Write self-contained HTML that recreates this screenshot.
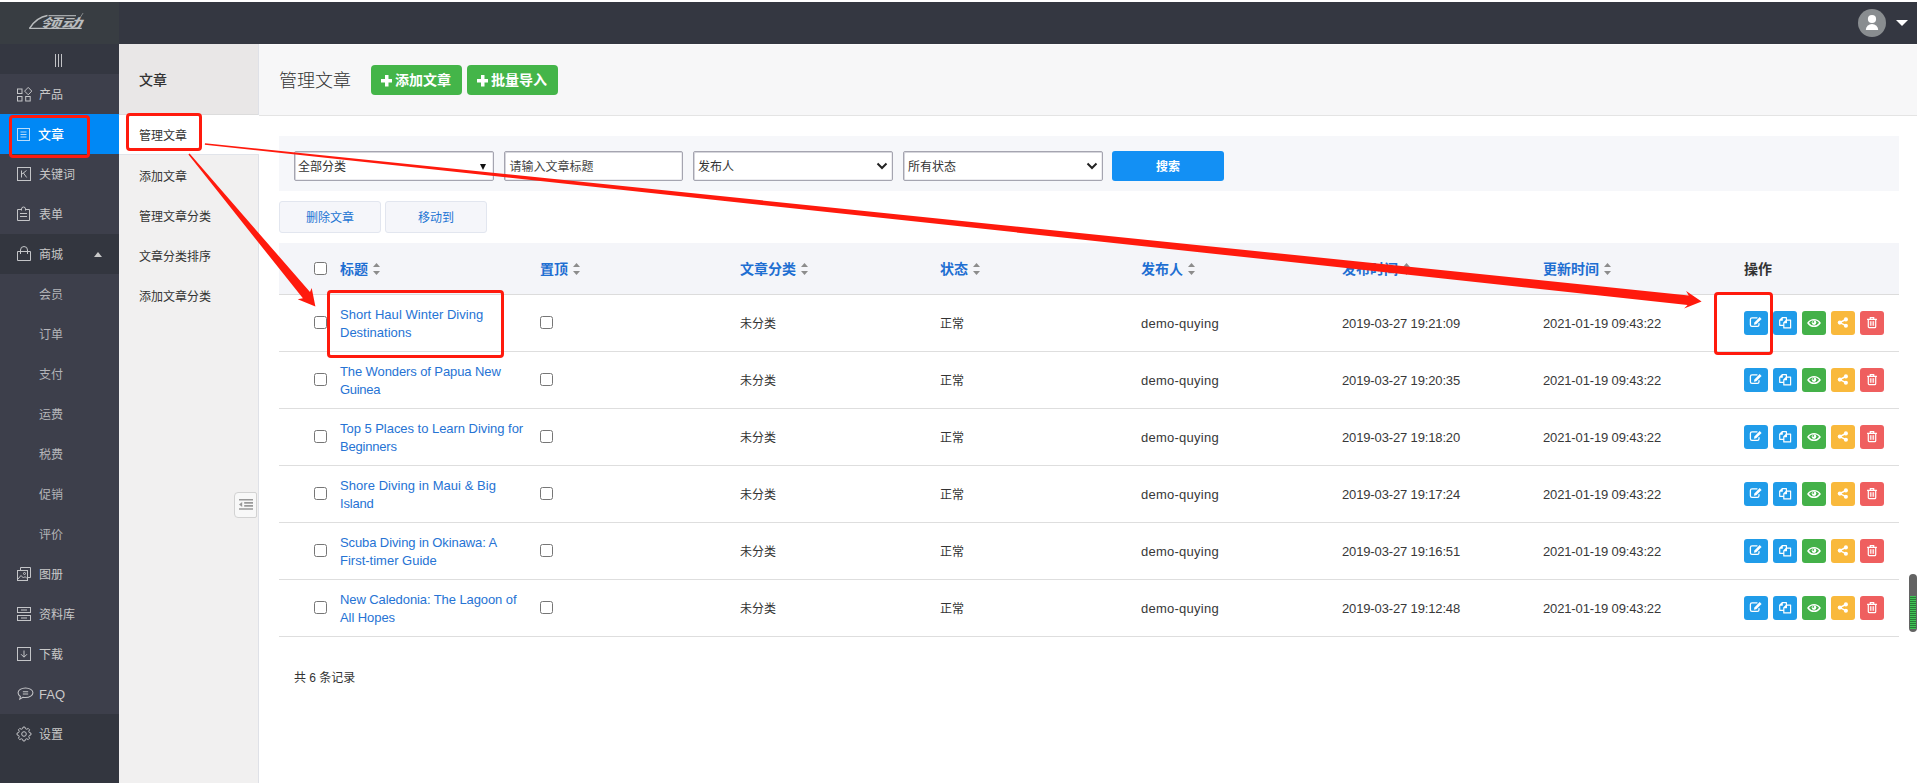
<!DOCTYPE html>
<html lang="zh-CN">
<head>
<meta charset="utf-8">
<title>管理文章</title>
<style>
*{box-sizing:border-box;margin:0;padding:0}
html,body{width:1917px;height:783px;overflow:hidden;background:#fff}
body{position:relative;font-family:"Liberation Sans","Noto Sans CJK SC",sans-serif;font-size:12px;color:#333}
a{text-decoration:none}
i{font-style:normal}
#hdr{position:absolute;left:0;top:2px;width:1917px;height:42px;background:#343741}
#logo{position:absolute;left:0;top:0;width:119px;height:42px;background:#383d42}
#logo svg{position:absolute;left:22px;top:6px}
#user{position:absolute;left:1858px;top:7px;width:59px;height:28px}
#user .caret{position:absolute;left:38px;top:11px;border:6px solid transparent;border-top:6.500px solid #fff;border-bottom:0}
#side{position:absolute;left:0;top:44px;width:119px;height:739px;background:#3d3f4b}
#side .tg{height:30px;background:#343741;position:relative}
#side .tg i{position:absolute;top:10px;width:1.300px;height:13px;background:#c2c3c6}
#side .tg i:nth-child(1){left:55px}#side .tg i:nth-child(2){left:58px}#side .tg i:nth-child(3){left:61px}
#side .mi{height:40px;position:relative;color:#c9c9c9;font-size:12px;line-height:42px;padding-left:39px;white-space:nowrap}
#side .mi.lt{font-size:13px}
#side .mi.sm{color:#b4b5b9}
#side .mi.dk{background:#33363f}
#side .mi.last{height:69px}
#side .mi.act{background:#0088f5;color:#fff;font-weight:500;font-size:13px;padding-left:38px}
#side .mi svg{position:absolute;left:16px;top:12px;width:16px;height:16px;color:#c4c5c8}
#side .mi.act svg{color:#b8dcfb}
#side .up{position:absolute;left:94px;top:18px;border:4px solid transparent;border-bottom:5px solid #c9c9c9;border-top:0}
#sub{position:absolute;left:119px;top:44px;width:139px;height:739px;background:#f1f0f0}
#sub:after{content:"";position:absolute;left:139px;top:0;width:1px;height:739px;background:#dfe1e7}
#sub h3{height:71px;line-height:73px;padding-left:20px;font-size:14px;font-weight:500;color:#333;background:#e9e7e7;border-bottom:1px solid #dcdcdc}
#sub .si{height:40px;line-height:44px;padding-left:20px;font-size:12px;color:#333}
#sub .si.act{background:#fff;width:140px;position:relative;z-index:2;height:40px;line-height:43px;border-bottom:1px solid #e1e4ea}
#fold{position:absolute;left:115px;top:448px;width:23px;height:26px;border:1px solid #d2d2d2;border-radius:4px 2px 2px 4px;background:#f8f8f8}
#fold svg{position:absolute;left:3.700px;top:6px}
#main{position:absolute;left:260px;top:44px;width:1657px;height:739px;background:#fff}
#tbar{position:absolute;left:-1px;top:0;width:1658px;height:72px;background:#f7f7f8;border-top:1px solid #fcfcfc;border-bottom:1px solid #e4e4e4}
#tbar h1{position:absolute;left:20px;top:22px;font-size:18px;font-weight:300;color:#333;line-height:28px}
.gbtn{position:absolute;top:20px;height:30px;background:#44b549;border-radius:4px;color:#fff;font-weight:bold;font-size:14px;line-height:31px;padding-left:24px;white-space:nowrap}
.gbtn .plus{position:absolute;left:9.500px;top:10px;width:11.500px;height:11.500px;background:linear-gradient(#fff,#fff) center/11.500px 3.500px no-repeat,linear-gradient(#fff,#fff) center/3.500px 11.500px no-repeat}
#filter{position:absolute;left:19px;top:92px;width:1620px;height:55px;background:#f6f7fa}
.sel,.inp{position:absolute;top:15px;height:30px;background:#fff;border:1px solid #a5a5b0;border-radius:2px;box-shadow:inset 1px 1px 0 #d6d6dc,inset -1px -1px 0 #ececf0;font-size:12px;line-height:31px;color:#333;padding-left:3px;white-space:nowrap}
.inp{padding-left:4.500px;color:#444}
.sel .tri{position:absolute;right:7px;top:12px;border:3.500px solid transparent;border-top:6px solid #111;border-bottom:0}
.sel .chev{position:absolute;right:4px;top:10px;width:12px;height:8px}
.sbtn{position:absolute;left:833px;top:15px;width:112px;height:30px;background:#1390f4;border-radius:3px;color:#fff;font-size:12px;font-weight:bold;line-height:33px;text-align:center}
.sel:not(.old){padding-left:4px}
.lbtn{position:absolute;top:157px;width:102px;height:32px;background:#f5f6fa;border:1px solid #e2e6ef;border-radius:3px;color:#2274d3;font-size:12px;line-height:32px;text-align:center}
#thead{position:absolute;left:19px;top:199px;width:1620px;height:52px;background:#f4f5f9;border-bottom:1px solid #dcdcdc}
.th{position:absolute;top:0;line-height:53px;font-size:14px;font-weight:bold;color:#1f6fd2;white-space:nowrap}
.th.dk{color:#333}
.srt{display:inline-block;width:7px;height:12px;margin-left:5px;vertical-align:-1px}
.cb{position:absolute;width:13px;height:13px;border:1px solid #767676;border-radius:2.500px;background:#fff}
.tr{position:absolute;left:19px;width:1620px;height:57px;border-bottom:1px solid #dedede}
.tr .td{position:absolute;top:0;line-height:59px;font-size:12px;color:#333;white-space:nowrap}
.tr .td.lat{font-size:13px;line-height:57px;color:#383838}
.tr .td.usr{letter-spacing:.25px}
.tr .td.dt{letter-spacing:-.14px}
.ttl{position:absolute;left:61px;top:11px;font-size:13px;line-height:18px;color:#2673d4;white-space:nowrap}
.ops{position:absolute;left:1465px;top:16px;height:24px;white-space:nowrap;font-size:0}
.ops i{display:inline-block;width:24px;height:24px;border-radius:3px;margin-right:5px;vertical-align:top}
.ops i svg{display:block;width:24px;height:24px}
.b1{background:#209ce9}.b2{background:#44b149}.b3{background:#f9b93c}.b4{background:#ef5f5f}
#total{position:absolute;left:34px;top:624.500px;font-size:12px;line-height:18px;color:#333}
#sbar{position:absolute;left:1649px;top:530px;width:8px;height:58px;border-radius:4px;background:#636363}
#sbar i{position:absolute;left:1px;top:22px;width:6px;height:33px;background:repeating-linear-gradient(#3fc455 0,#3fc455 1px,#2a7a38 1px,#2a7a38 2px)}
#anno{position:absolute;left:0;top:0;width:1917px;height:783px;z-index:10;pointer-events:none}

</style>
</head>
<body>
<div id="hdr">
<div id="logo"><svg viewBox="0 0 74 30" width="74" height="30"><g fill="none" stroke="#b9bcbe"><path d="M7.600 20.300C12 13.500 17 9 25.500 7.600" stroke-width="1.500"/><path d="M26.500 7.700h27.500" stroke-width="1.100"/><path d="M7.200 20.400h52.500" stroke-width="1.300"/><path d="M58 9.800l3.100-4.800" stroke-width=".6"/></g><text transform="translate(17.500 19.800) skewX(-24)" font-family="Liberation Sans,Noto Sans CJK SC,sans-serif" font-size="13" font-weight="bold" fill="#b9bcbe" textLength="42" lengthAdjust="spacingAndGlyphs">领动</text></svg></div>
<div id="user"><svg viewBox="0 0 28 28" width="28" height="28"><circle cx="14" cy="14" r="14" fill="#898d90"/><circle cx="14" cy="10" r="4.100" fill="#fff"/><path d="M7.800 21a6.200 6 0 0 1 12.400 0z" fill="#fff"/></svg><b class="caret"></b></div>
</div>
<div id="side"><div class="tg"><i></i><i></i><i></i></div><div class="mi "><svg viewBox="0 0 16 16"><rect x="1.500" y="3" width="4.500" height="4.500" fill="none" stroke="currentColor" stroke-width="1"/><rect x="1.500" y="10.500" width="4.500" height="4.500" fill="none" stroke="currentColor" stroke-width="1"/><rect x="9.700" y="10.500" width="4.500" height="4.500" fill="none" stroke="currentColor" stroke-width="1"/><path d="M12.200 1.400l3.600 3.700-3.600 3.700-3.600-3.700z" fill="none" stroke="currentColor" stroke-width="1"/></svg>产品</div><div class="mi act"><svg viewBox="0 0 16 16"><rect x="1.500" y="2.500" width="12" height="12" fill="none" stroke="currentColor" stroke-width="1"/><path d="M4.500 6h6M4.500 8.500h6M4.500 11h6" fill="none" stroke="currentColor" stroke-width="1"/></svg>文章</div><div class="mi "><svg viewBox="0 0 16 16"><rect x="1.500" y="1.500" width="13" height="13" fill="none" stroke="currentColor" stroke-width="1"/><path d="M5.500 4.500v7M10.500 4.500L5.700 8.300M7.400 7l3.300 4.500" fill="none" stroke="currentColor" stroke-width="1"/></svg>关键词</div><div class="mi "><svg viewBox="0 0 16 16"><path d="M5 3.500H1.500v11h12v-11H10" fill="none" stroke="currentColor" stroke-width="1"/><path d="M5.500 4.500V3a2 2 0 0 1 4 0v1.500" fill="none" stroke="currentColor" stroke-width="1"/><path d="M4 7.500h7M4 10.500h7" fill="none" stroke="currentColor" stroke-width="1"/></svg>表单</div><div class="mi dk"><svg viewBox="0 0 16 16"><path d="M1.500 5.500h13v9h-13z" fill="none" stroke="currentColor" stroke-width="1"/><path d="M4.500 8V4a3.200 3.200 0 0 1 7 0v4" fill="none" stroke="currentColor" stroke-width="1"/></svg>商城<b class="up"></b></div><div class="mi sm">会员</div><div class="mi sm">订单</div><div class="mi sm">支付</div><div class="mi sm">运费</div><div class="mi sm">税费</div><div class="mi sm">促销</div><div class="mi sm">评价</div><div class="mi "><svg viewBox="0 0 16 16"><path d="M4.500 4.500V1.500h10v10h-3" fill="none" stroke="currentColor" stroke-width="1"/><rect x="1.500" y="4.500" width="10" height="10" fill="none" stroke="currentColor" stroke-width="1"/><path d="M2 13l3-3.500 2.500 2.500 1.500-1.500 2 2" fill="none" stroke="currentColor" stroke-width="1"/><circle cx="8.500" cy="7.500" r="1" fill="none" stroke="currentColor" stroke-width="1"/></svg>图册</div><div class="mi "><svg viewBox="0 0 16 16"><rect x="1.500" y="1.500" width="13" height="5" fill="none" stroke="currentColor" stroke-width="1"/><rect x="1.500" y="9.500" width="13" height="5" fill="none" stroke="currentColor" stroke-width="1"/><path d="M5 4h6M5 12h6" fill="none" stroke="currentColor" stroke-width="1"/></svg>资料库</div><div class="mi "><svg viewBox="0 0 16 16"><rect x="1.500" y="1.500" width="13" height="13" fill="none" stroke="currentColor" stroke-width="1"/><path d="M8 4.500v6.500M5 8.200l3 3 3-3" fill="none" stroke="currentColor" stroke-width="1"/></svg>下载</div><div class="mi lt"><svg viewBox="0 0 16 16" style="width:17px;left:17px" preserveAspectRatio="none"><path d="M8 2c3.900 0 7 2.200 7 4.800s-3.100 4.800-7 4.800c-.9 0-1.700-.1-2.500-.3L2.600 13.200l.6-2.700C1.800 9.600 1 8.300 1 6.800 1 4.200 4.100 2 8 2z" fill="none" stroke="currentColor" stroke-width="1"/><path d="M5.500 5.800h5M5.500 8h5" fill="none" stroke="currentColor" stroke-width="1"/></svg>FAQ</div><div class="mi dk last"><svg viewBox="0 0 16 16"><path d="M14.94 7.07L14.94 8.93L13.32 9.41L12.76 10.76L13.56 12.25L12.25 13.56L10.76 12.76L9.41 13.32L8.93 14.94L7.07 14.94L6.59 13.32L5.24 12.76L3.75 13.56L2.44 12.25L3.24 10.76L2.68 9.41L1.06 8.93L1.06 7.07L2.68 6.59L3.24 5.24L2.44 3.75L3.75 2.44L5.24 3.24L6.59 2.68L7.07 1.06L8.93 1.06L9.41 2.68L10.76 3.24L12.25 2.44L13.56 3.75L12.76 5.24L13.32 6.59z" fill="none" stroke="currentColor" stroke-width="1" stroke-linejoin="round"/><circle cx="8" cy="8" r="2.300" fill="none" stroke="currentColor" stroke-width="1"/></svg>设置</div></div>
<div id="sub"><h3>文章</h3><div class="si act">管理文章</div><div class="si">添加文章</div><div class="si">管理文章分类</div><div class="si">文章分类排序</div><div class="si">添加文章分类</div>
<div id="fold"><svg viewBox="0 0 14 11" width="14" height="11"><path d="M0 .800h14M5.200 3.900h8.800M5.200 6.900h8.800M0 10h14" stroke="#999" stroke-width="1.600"/><path d="M3.200 2.900v5L0 5.400z" fill="#999"/></svg></div>
</div>
<div id="main">
<div id="tbar"><h1>管理文章</h1><a class="gbtn" style="left:112px;width:91px"><b class="plus"></b>添加文章</a><a class="gbtn" style="left:208px;width:91px"><b class="plus"></b>批量导入</a></div>
<div id="filter">
<span class="sel old" style="left:15px;width:200px">全部分类<b class="tri"></b></span>
<span class="inp" style="left:225px;width:179px">请输入文章标题</span>
<span class="sel" style="left:414px;width:200px">发布人<svg class="chev" viewBox="0 0 12 8"><path d="M1.500 1.500L6 6l4.500-4.500" fill="none" stroke="#222" stroke-width="2"/></svg></span>
<span class="sel" style="left:624px;width:200px">所有状态<svg class="chev" viewBox="0 0 12 8"><path d="M1.500 1.500L6 6l4.500-4.500" fill="none" stroke="#222" stroke-width="2"/></svg></span>
<a class="sbtn">搜索</a>
</div>
<a class="lbtn" style="left:19px">删除文章</a><a class="lbtn" style="left:125px">移动到</a>
<div id="thead"><span class="cb" style="left:35px;top:19px"></span><span class="th " style="left:61px">标题<svg class="srt" viewBox="0 0 7 12"><path d="M3.500 0L7 4H0z M3.500 12L7 8H0z" fill="#8c8c8c"/></svg></span><span class="th " style="left:261px">置顶<svg class="srt" viewBox="0 0 7 12"><path d="M3.500 0L7 4H0z M3.500 12L7 8H0z" fill="#8c8c8c"/></svg></span><span class="th " style="left:461px">文章分类<svg class="srt" viewBox="0 0 7 12"><path d="M3.500 0L7 4H0z M3.500 12L7 8H0z" fill="#8c8c8c"/></svg></span><span class="th " style="left:661px">状态<svg class="srt" viewBox="0 0 7 12"><path d="M3.500 0L7 4H0z M3.500 12L7 8H0z" fill="#8c8c8c"/></svg></span><span class="th " style="left:862px">发布人<svg class="srt" viewBox="0 0 7 12"><path d="M3.500 0L7 4H0z M3.500 12L7 8H0z" fill="#8c8c8c"/></svg></span><span class="th " style="left:1063px">发布时间<svg class="srt" viewBox="0 0 7 12"><path d="M3.500 0L7 4H0z M3.500 12L7 8H0z" fill="#8c8c8c"/></svg></span><span class="th " style="left:1264px">更新时间<svg class="srt" viewBox="0 0 7 12"><path d="M3.500 0L7 4H0z M3.500 12L7 8H0z" fill="#8c8c8c"/></svg></span><span class="th dk" style="left:1465px">操作</span></div>
<div class="tr" style="top:251px">
<span class="cb" style="left:35px;top:21px"></span>
<a class="ttl"><span style="letter-spacing:0.04px">Short Haul Winter Diving</span><br><span style="letter-spacing:0px">Destinations</span></a>
<span class="cb" style="left:261px;top:21px"></span>
<span class="td" style="left:461px">未分类</span>
<span class="td" style="left:661px">正常</span>
<span class="td lat usr" style="left:862px">demo-quying</span>
<span class="td lat dt" style="left:1063px">2019-03-27 19:21:09</span>
<span class="td lat dt" style="left:1264px">2021-01-19 09:43:22</span>
<span class="ops"><i class="b1"><svg viewBox="0 0 24 24"><path d="M15 12.600V13.800a1.600 1.600 0 0 1-1.600 1.600H8a1.600 1.600 0 0 1-1.600-1.600V8.400A1.600 1.600 0 0 1 8 6.800H13" fill="none" stroke="#fff" stroke-width="1.300" stroke-linecap="round"/><path d="M9.900 13.700l.5-2.300 5.300-5.300 1.900 1.900-5.300 5.300z" fill="#fff"/></svg></i><i class="b1"><svg viewBox="0 0 24 24"><path d="M9.200 6.700h4.200v3M10.800 14.300H6.700V9.200l2.500-2.500v2.500H6.700" fill="none" stroke="#fff" stroke-width="1.200" stroke-linejoin="round"/><path d="M13.400 9.100h4.200v7.800h-6.800v-5.200z M13.400 9.100v2.600h-2.600" fill="none" stroke="#fff" stroke-width="1.200" stroke-linejoin="round"/></svg></i><i class="b2"><svg viewBox="0 0 24 24"><path d="M6 12c1.500-2.300 3.500-3.400 6-3.400s4.500 1.100 6 3.400c-1.500 2.200-3.500 3.300-6 3.300s-4.500-1.100-6-3.300z" fill="none" stroke="#fff" stroke-width="1.400"/><circle cx="12" cy="11.600" r="2.300" fill="#fff"/><circle cx="11.300" cy="10.900" r=".9" fill="#44b149"/></svg></i><i class="b3"><svg viewBox="0 0 24 24"><path d="M14.900 8.500L8.700 11.600l6.200 3.100" fill="none" stroke="#fff" stroke-width="1.400"/><circle cx="14.900" cy="8.400" r="2.050" fill="#fff"/><circle cx="8.800" cy="11.600" r="2.050" fill="#fff"/><circle cx="14.900" cy="14.800" r="2.050" fill="#fff"/></svg></i><i class="b4"><svg viewBox="0 0 24 24"><path d="M7.100 8.300h9.800M10.300 8V6.700h3.400V8" fill="none" stroke="#fff" stroke-width="1.200"/><path d="M8.300 8.600v7.200a.9.900 0 0 0 .9.900h5.600a.9.900 0 0 0 .9-.9V8.600" fill="none" stroke="#fff" stroke-width="1.200"/><path d="M10.400 10.200v4.600M12 10.200v4.600M13.600 10.200v4.600" stroke="#fff" stroke-width=".9"/></svg></i></span>
</div>
<div class="tr" style="top:308px">
<span class="cb" style="left:35px;top:21px"></span>
<a class="ttl"><span style="letter-spacing:-0.1px">The Wonders of Papua New</span><br><span style="letter-spacing:-0.3px">Guinea</span></a>
<span class="cb" style="left:261px;top:21px"></span>
<span class="td" style="left:461px">未分类</span>
<span class="td" style="left:661px">正常</span>
<span class="td lat usr" style="left:862px">demo-quying</span>
<span class="td lat dt" style="left:1063px">2019-03-27 19:20:35</span>
<span class="td lat dt" style="left:1264px">2021-01-19 09:43:22</span>
<span class="ops"><i class="b1"><svg viewBox="0 0 24 24"><path d="M15 12.600V13.800a1.600 1.600 0 0 1-1.600 1.600H8a1.600 1.600 0 0 1-1.600-1.600V8.400A1.600 1.600 0 0 1 8 6.800H13" fill="none" stroke="#fff" stroke-width="1.300" stroke-linecap="round"/><path d="M9.900 13.700l.5-2.300 5.300-5.300 1.900 1.900-5.300 5.300z" fill="#fff"/></svg></i><i class="b1"><svg viewBox="0 0 24 24"><path d="M9.200 6.700h4.200v3M10.800 14.300H6.700V9.200l2.500-2.500v2.500H6.700" fill="none" stroke="#fff" stroke-width="1.200" stroke-linejoin="round"/><path d="M13.400 9.100h4.200v7.800h-6.800v-5.200z M13.400 9.100v2.600h-2.600" fill="none" stroke="#fff" stroke-width="1.200" stroke-linejoin="round"/></svg></i><i class="b2"><svg viewBox="0 0 24 24"><path d="M6 12c1.500-2.300 3.500-3.400 6-3.400s4.500 1.100 6 3.400c-1.500 2.200-3.500 3.300-6 3.300s-4.500-1.100-6-3.300z" fill="none" stroke="#fff" stroke-width="1.400"/><circle cx="12" cy="11.600" r="2.300" fill="#fff"/><circle cx="11.300" cy="10.900" r=".9" fill="#44b149"/></svg></i><i class="b3"><svg viewBox="0 0 24 24"><path d="M14.900 8.500L8.700 11.600l6.200 3.100" fill="none" stroke="#fff" stroke-width="1.400"/><circle cx="14.900" cy="8.400" r="2.050" fill="#fff"/><circle cx="8.800" cy="11.600" r="2.050" fill="#fff"/><circle cx="14.900" cy="14.800" r="2.050" fill="#fff"/></svg></i><i class="b4"><svg viewBox="0 0 24 24"><path d="M7.100 8.300h9.800M10.300 8V6.700h3.400V8" fill="none" stroke="#fff" stroke-width="1.200"/><path d="M8.300 8.600v7.200a.9.900 0 0 0 .9.900h5.600a.9.900 0 0 0 .9-.9V8.600" fill="none" stroke="#fff" stroke-width="1.200"/><path d="M10.400 10.200v4.600M12 10.200v4.600M13.600 10.200v4.600" stroke="#fff" stroke-width=".9"/></svg></i></span>
</div>
<div class="tr" style="top:365px">
<span class="cb" style="left:35px;top:21px"></span>
<a class="ttl"><span style="letter-spacing:-0.035px">Top 5 Places to Learn Diving for</span><br><span style="letter-spacing:-0.2px">Beginners</span></a>
<span class="cb" style="left:261px;top:21px"></span>
<span class="td" style="left:461px">未分类</span>
<span class="td" style="left:661px">正常</span>
<span class="td lat usr" style="left:862px">demo-quying</span>
<span class="td lat dt" style="left:1063px">2019-03-27 19:18:20</span>
<span class="td lat dt" style="left:1264px">2021-01-19 09:43:22</span>
<span class="ops"><i class="b1"><svg viewBox="0 0 24 24"><path d="M15 12.600V13.800a1.600 1.600 0 0 1-1.600 1.600H8a1.600 1.600 0 0 1-1.600-1.600V8.400A1.600 1.600 0 0 1 8 6.800H13" fill="none" stroke="#fff" stroke-width="1.300" stroke-linecap="round"/><path d="M9.900 13.700l.5-2.300 5.300-5.300 1.900 1.900-5.300 5.300z" fill="#fff"/></svg></i><i class="b1"><svg viewBox="0 0 24 24"><path d="M9.200 6.700h4.200v3M10.800 14.300H6.700V9.200l2.500-2.500v2.500H6.700" fill="none" stroke="#fff" stroke-width="1.200" stroke-linejoin="round"/><path d="M13.400 9.100h4.200v7.800h-6.800v-5.200z M13.400 9.100v2.600h-2.600" fill="none" stroke="#fff" stroke-width="1.200" stroke-linejoin="round"/></svg></i><i class="b2"><svg viewBox="0 0 24 24"><path d="M6 12c1.500-2.300 3.500-3.400 6-3.400s4.500 1.100 6 3.400c-1.500 2.200-3.500 3.300-6 3.300s-4.500-1.100-6-3.300z" fill="none" stroke="#fff" stroke-width="1.400"/><circle cx="12" cy="11.600" r="2.300" fill="#fff"/><circle cx="11.300" cy="10.900" r=".9" fill="#44b149"/></svg></i><i class="b3"><svg viewBox="0 0 24 24"><path d="M14.900 8.500L8.700 11.600l6.200 3.100" fill="none" stroke="#fff" stroke-width="1.400"/><circle cx="14.900" cy="8.400" r="2.050" fill="#fff"/><circle cx="8.800" cy="11.600" r="2.050" fill="#fff"/><circle cx="14.900" cy="14.800" r="2.050" fill="#fff"/></svg></i><i class="b4"><svg viewBox="0 0 24 24"><path d="M7.100 8.300h9.800M10.300 8V6.700h3.400V8" fill="none" stroke="#fff" stroke-width="1.200"/><path d="M8.300 8.600v7.200a.9.900 0 0 0 .9.900h5.600a.9.900 0 0 0 .9-.9V8.600" fill="none" stroke="#fff" stroke-width="1.200"/><path d="M10.400 10.200v4.600M12 10.200v4.600M13.600 10.200v4.600" stroke="#fff" stroke-width=".9"/></svg></i></span>
</div>
<div class="tr" style="top:422px">
<span class="cb" style="left:35px;top:21px"></span>
<a class="ttl"><span style="letter-spacing:0.055px">Shore Diving in Maui &amp; Big</span><br><span style="letter-spacing:-0.2px">Island</span></a>
<span class="cb" style="left:261px;top:21px"></span>
<span class="td" style="left:461px">未分类</span>
<span class="td" style="left:661px">正常</span>
<span class="td lat usr" style="left:862px">demo-quying</span>
<span class="td lat dt" style="left:1063px">2019-03-27 19:17:24</span>
<span class="td lat dt" style="left:1264px">2021-01-19 09:43:22</span>
<span class="ops"><i class="b1"><svg viewBox="0 0 24 24"><path d="M15 12.600V13.800a1.600 1.600 0 0 1-1.600 1.600H8a1.600 1.600 0 0 1-1.600-1.600V8.400A1.600 1.600 0 0 1 8 6.800H13" fill="none" stroke="#fff" stroke-width="1.300" stroke-linecap="round"/><path d="M9.900 13.700l.5-2.300 5.300-5.300 1.900 1.900-5.300 5.300z" fill="#fff"/></svg></i><i class="b1"><svg viewBox="0 0 24 24"><path d="M9.200 6.700h4.200v3M10.800 14.300H6.700V9.200l2.500-2.500v2.500H6.700" fill="none" stroke="#fff" stroke-width="1.200" stroke-linejoin="round"/><path d="M13.400 9.100h4.200v7.800h-6.800v-5.200z M13.400 9.100v2.600h-2.600" fill="none" stroke="#fff" stroke-width="1.200" stroke-linejoin="round"/></svg></i><i class="b2"><svg viewBox="0 0 24 24"><path d="M6 12c1.500-2.300 3.500-3.400 6-3.400s4.500 1.100 6 3.400c-1.500 2.200-3.500 3.300-6 3.300s-4.500-1.100-6-3.300z" fill="none" stroke="#fff" stroke-width="1.400"/><circle cx="12" cy="11.600" r="2.300" fill="#fff"/><circle cx="11.300" cy="10.900" r=".9" fill="#44b149"/></svg></i><i class="b3"><svg viewBox="0 0 24 24"><path d="M14.900 8.500L8.700 11.600l6.200 3.100" fill="none" stroke="#fff" stroke-width="1.400"/><circle cx="14.900" cy="8.400" r="2.050" fill="#fff"/><circle cx="8.800" cy="11.600" r="2.050" fill="#fff"/><circle cx="14.900" cy="14.800" r="2.050" fill="#fff"/></svg></i><i class="b4"><svg viewBox="0 0 24 24"><path d="M7.100 8.300h9.800M10.300 8V6.700h3.400V8" fill="none" stroke="#fff" stroke-width="1.200"/><path d="M8.300 8.600v7.200a.9.900 0 0 0 .9.900h5.600a.9.900 0 0 0 .9-.9V8.600" fill="none" stroke="#fff" stroke-width="1.200"/><path d="M10.400 10.200v4.600M12 10.200v4.600M13.600 10.200v4.600" stroke="#fff" stroke-width=".9"/></svg></i></span>
</div>
<div class="tr" style="top:479px">
<span class="cb" style="left:35px;top:21px"></span>
<a class="ttl"><span style="letter-spacing:-0.1px">Scuba Diving in Okinawa: A</span><br><span style="letter-spacing:0px">First-timer Guide</span></a>
<span class="cb" style="left:261px;top:21px"></span>
<span class="td" style="left:461px">未分类</span>
<span class="td" style="left:661px">正常</span>
<span class="td lat usr" style="left:862px">demo-quying</span>
<span class="td lat dt" style="left:1063px">2019-03-27 19:16:51</span>
<span class="td lat dt" style="left:1264px">2021-01-19 09:43:22</span>
<span class="ops"><i class="b1"><svg viewBox="0 0 24 24"><path d="M15 12.600V13.800a1.600 1.600 0 0 1-1.600 1.600H8a1.600 1.600 0 0 1-1.600-1.600V8.400A1.600 1.600 0 0 1 8 6.800H13" fill="none" stroke="#fff" stroke-width="1.300" stroke-linecap="round"/><path d="M9.900 13.700l.5-2.300 5.300-5.300 1.900 1.900-5.300 5.300z" fill="#fff"/></svg></i><i class="b1"><svg viewBox="0 0 24 24"><path d="M9.200 6.700h4.200v3M10.800 14.300H6.700V9.200l2.500-2.500v2.500H6.700" fill="none" stroke="#fff" stroke-width="1.200" stroke-linejoin="round"/><path d="M13.400 9.100h4.200v7.800h-6.800v-5.200z M13.400 9.100v2.600h-2.600" fill="none" stroke="#fff" stroke-width="1.200" stroke-linejoin="round"/></svg></i><i class="b2"><svg viewBox="0 0 24 24"><path d="M6 12c1.500-2.300 3.500-3.400 6-3.400s4.500 1.100 6 3.400c-1.500 2.200-3.500 3.300-6 3.300s-4.500-1.100-6-3.300z" fill="none" stroke="#fff" stroke-width="1.400"/><circle cx="12" cy="11.600" r="2.300" fill="#fff"/><circle cx="11.300" cy="10.900" r=".9" fill="#44b149"/></svg></i><i class="b3"><svg viewBox="0 0 24 24"><path d="M14.900 8.500L8.700 11.600l6.200 3.100" fill="none" stroke="#fff" stroke-width="1.400"/><circle cx="14.900" cy="8.400" r="2.050" fill="#fff"/><circle cx="8.800" cy="11.600" r="2.050" fill="#fff"/><circle cx="14.900" cy="14.800" r="2.050" fill="#fff"/></svg></i><i class="b4"><svg viewBox="0 0 24 24"><path d="M7.100 8.300h9.800M10.300 8V6.700h3.400V8" fill="none" stroke="#fff" stroke-width="1.200"/><path d="M8.300 8.600v7.200a.9.900 0 0 0 .9.900h5.600a.9.900 0 0 0 .9-.9V8.600" fill="none" stroke="#fff" stroke-width="1.200"/><path d="M10.400 10.200v4.600M12 10.200v4.600M13.600 10.200v4.600" stroke="#fff" stroke-width=".9"/></svg></i></span>
</div>
<div class="tr" style="top:536px">
<span class="cb" style="left:35px;top:21px"></span>
<a class="ttl"><span style="letter-spacing:-0.093px">New Caledonia: The Lagoon of</span><br><span style="letter-spacing:-0.07px">All Hopes</span></a>
<span class="cb" style="left:261px;top:21px"></span>
<span class="td" style="left:461px">未分类</span>
<span class="td" style="left:661px">正常</span>
<span class="td lat usr" style="left:862px">demo-quying</span>
<span class="td lat dt" style="left:1063px">2019-03-27 19:12:48</span>
<span class="td lat dt" style="left:1264px">2021-01-19 09:43:22</span>
<span class="ops"><i class="b1"><svg viewBox="0 0 24 24"><path d="M15 12.600V13.800a1.600 1.600 0 0 1-1.600 1.600H8a1.600 1.600 0 0 1-1.600-1.600V8.400A1.600 1.600 0 0 1 8 6.800H13" fill="none" stroke="#fff" stroke-width="1.300" stroke-linecap="round"/><path d="M9.900 13.700l.5-2.300 5.300-5.300 1.900 1.900-5.300 5.300z" fill="#fff"/></svg></i><i class="b1"><svg viewBox="0 0 24 24"><path d="M9.200 6.700h4.200v3M10.800 14.300H6.700V9.200l2.500-2.500v2.500H6.700" fill="none" stroke="#fff" stroke-width="1.200" stroke-linejoin="round"/><path d="M13.400 9.100h4.200v7.800h-6.800v-5.200z M13.400 9.100v2.600h-2.600" fill="none" stroke="#fff" stroke-width="1.200" stroke-linejoin="round"/></svg></i><i class="b2"><svg viewBox="0 0 24 24"><path d="M6 12c1.500-2.300 3.500-3.400 6-3.400s4.500 1.100 6 3.400c-1.500 2.200-3.500 3.300-6 3.300s-4.500-1.100-6-3.300z" fill="none" stroke="#fff" stroke-width="1.400"/><circle cx="12" cy="11.600" r="2.300" fill="#fff"/><circle cx="11.300" cy="10.900" r=".9" fill="#44b149"/></svg></i><i class="b3"><svg viewBox="0 0 24 24"><path d="M14.900 8.500L8.700 11.600l6.200 3.100" fill="none" stroke="#fff" stroke-width="1.400"/><circle cx="14.900" cy="8.400" r="2.050" fill="#fff"/><circle cx="8.800" cy="11.600" r="2.050" fill="#fff"/><circle cx="14.900" cy="14.800" r="2.050" fill="#fff"/></svg></i><i class="b4"><svg viewBox="0 0 24 24"><path d="M7.100 8.300h9.800M10.300 8V6.700h3.400V8" fill="none" stroke="#fff" stroke-width="1.200"/><path d="M8.300 8.600v7.200a.9.900 0 0 0 .9.900h5.600a.9.900 0 0 0 .9-.9V8.600" fill="none" stroke="#fff" stroke-width="1.200"/><path d="M10.400 10.200v4.600M12 10.200v4.600M13.600 10.200v4.600" stroke="#fff" stroke-width=".9"/></svg></i></span>
</div>
<div id="total">共 6 条记录</div>
<div id="sbar"><i></i></div>
</div>
<svg id="anno" viewBox="0 0 1917 783" width="1917" height="783">
<g fill="none" stroke="#ff1a0d" stroke-width="3">
<rect x="10.500" y="116.500" width="78" height="40" rx="2.500"/>
<rect x="127.500" y="114.500" width="73" height="35" rx="2.500"/>
<rect x="328.500" y="291.500" width="174" height="65" rx="2.500"/>
<rect x="1715.500" y="293.500" width="56" height="60" rx="2.500"/>
</g>
<g fill="#ff1a0d">
<polygon points="188.400,154.600 189.600,153.600 310,292 311.700,288 315.400,306.500 297.700,299.300 302.900,298.300"/>
<polygon points="205,143.300 204.800,144.700 1687.600,305 1684.100,308.600 1701.600,301.400 1686.100,291 1688.700,295.400"/>
</g>
</svg>

</body>
</html>
